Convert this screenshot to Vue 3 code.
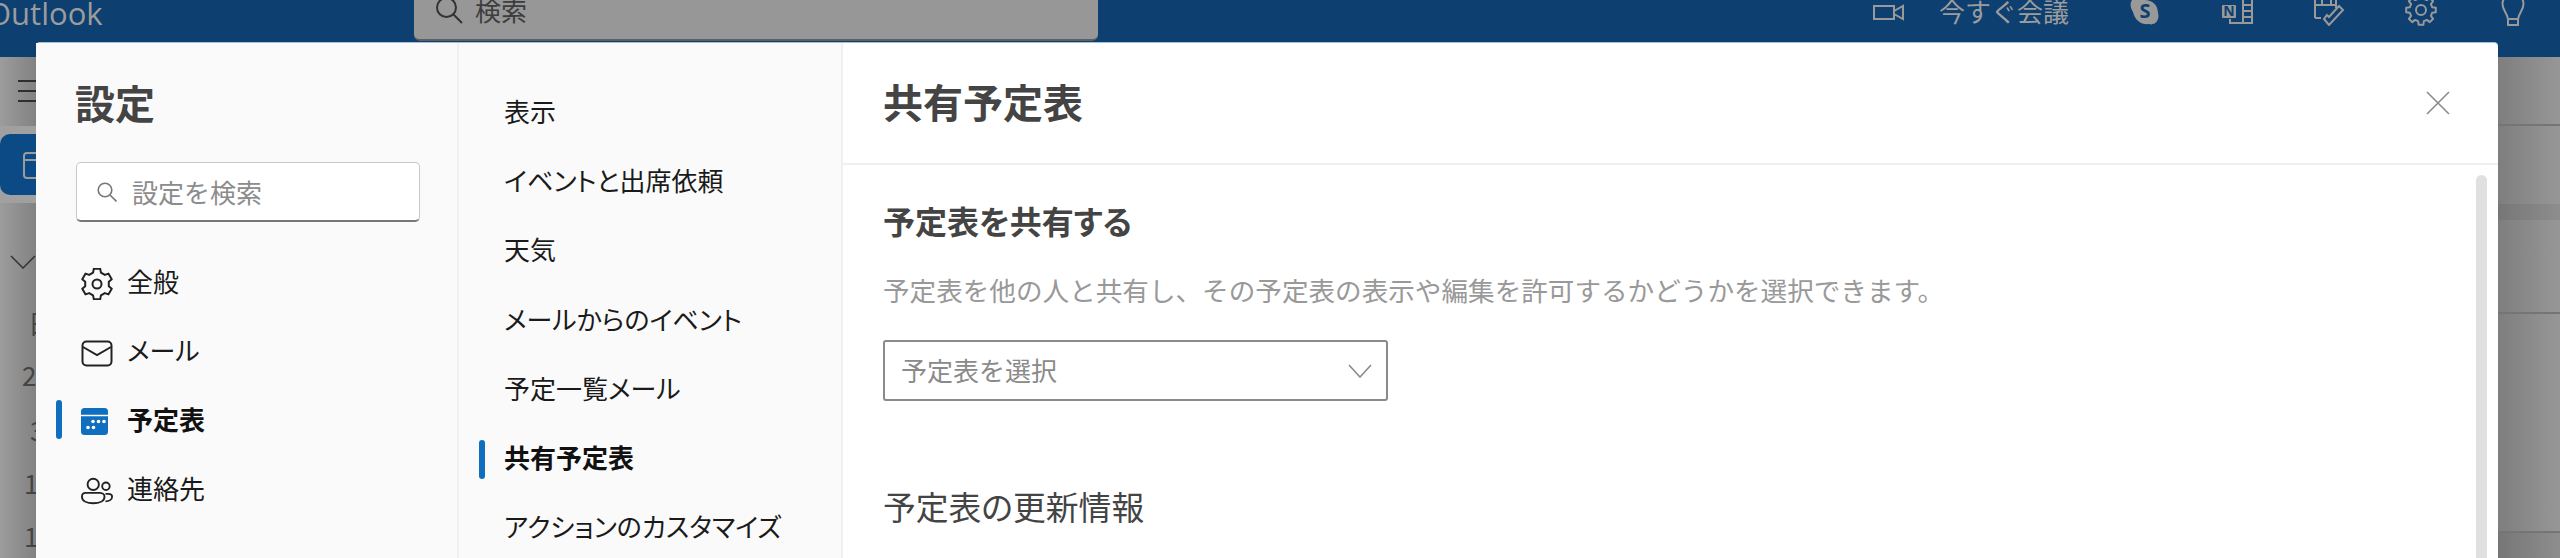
<script setup>
// gear outline, same helper for the header icon and the settings nav
const gearPath = (c, inner, outer, teeth) => {
  const step = (Math.PI * 2) / teeth
  const pts = []
  for (let i = 0; i < teeth; i++) {
    const a = i * step - Math.PI / 2
    const w = step * 0.2
    const g = step * 0.32
    pts.push([a - g, inner], [a - w, outer], [a + w, outer], [a + g, inner])
  }
  return (
    'M' +
    pts
      .map(([a, r]) => (c + r * Math.cos(a)).toFixed(2) + ' ' + (c + r * Math.sin(a)).toFixed(2))
      .join('L') +
    'Z'
  )
}

const topGear = gearPath(16, 11.5, 15, 8)
const navGear = gearPath(16, 12, 15.5, 6)

const railDays = [
  { t: '日', x: 28, h: 52 },
  { t: '2', x: 22, h: 55 },
  { t: '3', x: 30, h: 53 },
  { t: '1', x: 24, h: 53 },
  { t: '1', x: 24, h: 53 }
]

const stripBands = [
  { h: 69, line: true },
  { h: 78, line: false },
  { h: 16, line: false, dark: true },
  { h: 94, line: true },
  { h: 96, line: false },
  { h: 123, line: true },
  { h: 30, line: false, dark: true }
]

const subItems = [
  { label: '表示' },
  { label: 'イベントと出席依頼' },
  { label: '天気' },
  { label: 'メールからのイベント' },
  { label: '予定一覧メール' },
  { label: '共有予定表', active: true },
  { label: 'アクションのカスタマイズ' }
]
</script>

<template>
  <div class="page">
    <header class="topbar">
      <div class="logo">Outlook</div>
      <div class="topsearch">
        <svg class="topsearch-icon" width="28" height="28" viewBox="0 0 28 28" fill="none" stroke="#333" stroke-width="2">
          <circle cx="11.5" cy="11.5" r="9.5" />
          <path d="M18.5 18.5 27 27" />
        </svg>
        <span>検索</span>
      </div>
      <div class="top-actions">
        <div class="meet">
          <svg width="32" height="32" viewBox="0 0 32 32" fill="none" stroke="#999" stroke-width="2">
            <rect x="1" y="12" width="20" height="13" />
            <path d="M21 17 30 12V25L21 20" />
          </svg>
          <span>今すぐ会議</span>
        </div>
        <svg width="32" height="32" viewBox="0 0 32 32">
          <path d="M3 6C6 3 12 5 16 6 23 6 29 11 29 19 31 26 26 32 20 30 13 31 6 27 4 18 1 13 1 9 3 6Z" fill="#999" />
          <text x="16" y="24" text-anchor="middle" class="icon-letter">S</text>
        </svg>
        <svg width="32" height="32" viewBox="0 0 32 32" fill="none" stroke="#999" stroke-width="2">
          <path d="M9 25V29H31V3H22V29M22 11H31M22 17H31M22 23H31" />
          <rect x="1" y="11" width="14" height="13" rx="1" fill="#999" stroke="none" />
          <text x="8" y="22" text-anchor="middle" class="icon-letter small">N</text>
        </svg>
        <svg width="32" height="32" viewBox="0 0 32 32" fill="none" stroke="#999" stroke-width="2">
          <path d="M2 24H8M2 24V2M2 11H23M23 2V14M9 6V11M18 6V11" />
          <path d="M11 25 16 31 30 16 26 12 16 23 14 21Z" />
        </svg>
        <svg width="32" height="32" viewBox="0 0 32 32" fill="none" stroke="#999" stroke-width="2" stroke-linejoin="round">
          <path :d="topGear" />
          <circle cx="16" cy="16" r="5" />
        </svg>
        <svg width="32" height="32" viewBox="0 0 32 32" fill="none" stroke="#999" stroke-width="2">
          <path d="M11 25C10 19 5.500 16 5.500 10 5.500 4 10 0 16 0 22 0 26.500 4 26.500 10 26.500 16 22 19 21 25Z" />
          <path d="M11 25V31H21V25" />
        </svg>
      </div>
    </header>

    <div class="behind">
      <aside class="rail">
        <div class="burger"><i></i><i></i><i></i></div>
        <div class="rail-app">
          <div class="rail-btn">
            <svg width="46" height="30" viewBox="0 0 46 30" fill="none" stroke="#9b9b9b" stroke-width="2">
              <rect x="24" y="3" width="30" height="25" rx="3" />
              <path d="M24 10H54" />
            </svg>
          </div>
        </div>
        <svg class="rail-chevron" width="26" height="14" viewBox="0 0 26 14" fill="none" stroke="#333" stroke-width="1.500">
          <path d="M1 1 13 13 25 1" />
        </svg>
        <div
          v-for="(d, i) in railDays"
          :key="i"
          class="rail-day"
          :style="{ paddingLeft: d.x + 'px', height: d.h + 'px' }"
        >{{ d.t }}</div>
      </aside>
      <div class="behind-fill"></div>
      <div class="strip">
        <div
          v-for="(b, i) in stripBands"
          :key="i"
          class="band"
          :class="{ line: b.line, dark: b.dark }"
          :style="{ height: b.h + 'px' }"
        ></div>
      </div>
    </div>

    <section class="modal">
      <div class="col-nav">
        <h1 class="modal-title">設定</h1>
        <div class="search">
          <svg width="20" height="20" viewBox="0 0 20 20" fill="none" stroke="#777" stroke-width="1.600">
            <circle cx="8" cy="8" r="6.800" />
            <path d="M13 13 19.500 19.500" />
          </svg>
          <span>設定を検索</span>
        </div>
        <nav class="nav">
          <div class="nav-item">
            <svg class="nav-icon" width="32" height="32" viewBox="0 0 32 32" fill="none" stroke="#222" stroke-width="2" stroke-linejoin="round">
              <path :d="navGear" />
              <circle cx="16" cy="16" r="4.500" />
            </svg>
            <span>全般</span>
          </div>
          <div class="nav-item">
            <svg class="nav-icon" width="32" height="32" viewBox="0 0 32 32" fill="none" stroke="#222" stroke-width="2">
              <rect x="1.500" y="4.500" width="29" height="24" rx="4" />
              <path d="M2 10 16 18 30 10" />
            </svg>
            <span>メール</span>
          </div>
          <div class="nav-item active">
            <svg class="nav-icon" width="32" height="32" viewBox="0 0 32 32">
              <rect x="0" y="2" width="27" height="27" rx="3.500" fill="#106ebe" />
              <path d="M0 9.500H27" stroke="#fff" stroke-width="1.500" />
              <g fill="#fff">
                <circle cx="12" cy="15.500" r="1.800" />
                <circle cx="17.500" cy="15.500" r="1.800" />
                <circle cx="23" cy="15.500" r="1.800" />
                <circle cx="7" cy="21.500" r="1.800" />
                <circle cx="12.500" cy="21.500" r="1.800" />
              </g>
            </svg>
            <span>予定表</span>
          </div>
          <div class="nav-item">
            <svg class="nav-icon" width="34" height="32" viewBox="0 0 34 32" fill="none" stroke="#222" stroke-width="2">
              <circle cx="13" cy="9" r="6" />
              <circle cx="26.500" cy="11" r="4" />
              <path d="M1 22C1 19 3 18 5 18H20C22 18 25 19 25 22 25 27 19 29 13 29 7 29 1 27 1 22Z" />
              <path d="M26 19H29C31 19 33 20 33 22 33 25 30 27 26 27" />
            </svg>
            <span>連絡先</span>
          </div>
        </nav>
      </div>

      <div class="col-sub">
        <div
          v-for="item in subItems"
          :key="item.label"
          class="sub-item"
          :class="{ active: item.active }"
        >{{ item.label }}</div>
      </div>

      <div class="col-main">
        <div class="main-head">
          <h2 class="main-title">共有予定表</h2>
          <svg width="24" height="24" viewBox="0 0 24 24" fill="none" stroke="#8a8a8a" stroke-width="1.600">
            <path d="M1 1 23 23M23 1 1 23" />
          </svg>
        </div>
        <div class="main-body">
          <h3 class="section-title">予定表を共有する</h3>
          <p class="desc">予定表を他の人と共有し、その予定表の表示や編集を許可するかどうかを選択できます。</p>
          <div class="select">
            <span>予定表を選択</span>
            <svg width="24" height="14" viewBox="0 0 24 14" fill="none" stroke="#8a8a8a" stroke-width="1.600">
              <path d="M1 1 12 13 23 1" />
            </svg>
          </div>
          <h3 class="section-title plain">予定表の更新情報</h3>
        </div>
        <div class="scrollbar"></div>
      </div>
    </section>
  </div>
</template>

<style scoped>
.page {
  position: relative;
  width: 2560px;
  height: 558px;
  overflow: hidden;
  background: #969696;
  font-family: "Noto Sans CJK JP", "Open Sans", sans-serif;
}
.topbar {
  display: flex;
  align-items: flex-start;
  height: 57px;
  background: #0d3f71;
  color: #9c9c9c;
  padding-right: 31px;
  box-sizing: border-box;
  overflow: hidden;
}
.logo {
  font-family: "Open Sans", sans-serif;
  font-size: 31px;
  line-height: 40px;
  margin-top: -7px;
  margin-left: -13px;
  width: 427px;
  flex-shrink: 0;
}
.topsearch {
  display: flex;
  align-items: center;
  gap: 12px;
  width: 684px;
  height: 61px;
  margin-top: -20px;
  padding-left: 21px;
  box-sizing: border-box;
  background: #979797;
  border-bottom: 2px solid #5f5f5f;
  border-radius: 6px;
  color: #3d3d3d;
  font-size: 26px;
  flex-shrink: 0;
}
.top-actions {
  display: flex;
  align-items: flex-start;
  gap: 60px;
  margin-left: auto;
  margin-top: -6px;
}
.meet {
  display: flex;
  align-items: flex-start;
  gap: 34px;
  font-size: 26px;
  line-height: 34px;
}
.icon-letter {
  font-family: "Open Sans", sans-serif;
  font-size: 20px;
  font-weight: 700;
  fill: #0d3f71;
  stroke: none;
}
.icon-letter.small {
  font-size: 14px;
}

.behind {
  display: flex;
  height: 501px;
}
.rail {
  width: 36px;
  overflow: hidden;
  flex-shrink: 0;
  color: #444;
  font-size: 26px;
  background: linear-gradient(to right, #9c9c9c, #828282);
}
.burger {
  display: flex;
  flex-direction: column;
  gap: 8px;
  height: 69px;
  padding: 23px 0 0 18px;
  box-sizing: border-box;
}
.burger i {
  display: block;
  height: 2px;
  background: #2f2f2f;
}
.rail-app {
  height: 77px;
  padding: 8px 0;
  box-sizing: border-box;
  background: #a0a0a0;
}
.rail-btn {
  height: 61px;
  width: 46px;
  border-radius: 10px;
  background: #0c4a86;
  display: flex;
  align-items: center;
  overflow: hidden;
}
.rail-chevron {
  display: block;
  margin: 52px 0 28px 10px;
}
.rail-day {
  line-height: 52px;
  box-sizing: border-box;
}
.behind-fill {
  flex: 1;
}
.strip {
  width: 62px;
  flex-shrink: 0;
  background: linear-gradient(to right, #7e7e7e, #969696 60px);
}
.band.line {
  border-bottom: 2px solid #757575;
  box-sizing: border-box;
}
.band.dark {
  background: rgba(0, 0, 0, 0.06);
}

/* settings dialog sits on top of the dimmed app */
.modal {
  position: absolute;
  top: 42px;
  left: 36px;
  width: 2462px;
  height: 600px;
  display: flex;
  background: #fff;
  border-top: 1px solid #a8bfdb;
  border-radius: 4px 4px 0 0;
  box-sizing: border-box;
  color: #1a1a1a;
}
.col-nav {
  width: 423px;
  flex-shrink: 0;
  background: #fafafa;
  border-right: 2px solid #f0f0f0;
  box-sizing: border-box;
  padding: 33px 37px 0 39px;
}
.modal-title {
  margin: 0;
  font-size: 40px;
  line-height: 52px;
  font-weight: 700;
  color: #444;
}
.search {
  display: flex;
  align-items: center;
  gap: 15px;
  height: 60px;
  margin-top: 34px;
  margin-left: 1px;
  padding-left: 20px;
  box-sizing: border-box;
  background: #fff;
  border: 1px solid #c8c8c8;
  border-bottom: 2px solid #777;
  border-radius: 5px;
  color: #8c8c8c;
  font-size: 26px;
}
.nav {
  margin-top: 25px;
}
.nav-item {
  position: relative;
  display: flex;
  align-items: center;
  height: 69px;
  padding-left: 6px;
  gap: 14px;
  font-size: 26px;
  font-feature-settings: "palt";
}
.nav-item span {
  margin-bottom: 3px;
}
.nav-icon {
  width: 32px;
  flex-shrink: 0;
  margin-top: 5px;
}
.nav-item.active {
  font-weight: 700;
  color: #111;
}
.nav-item.active::before,
.sub-item.active::before {
  content: "";
  position: absolute;
  width: 6px;
  height: 39px;
  border-radius: 3px;
  background: #106ebe;
}
.nav-item.active::before {
  top: 15px;
  left: -19px;
}

.col-sub {
  width: 384px;
  flex-shrink: 0;
  background: #fafafa;
  border-right: 2px solid #f0f0f0;
  box-sizing: border-box;
  padding: 33px 0 0 45px;
}
.sub-item {
  position: relative;
  height: 69.2px;
  line-height: 69px;
  font-size: 26px;
  font-feature-settings: "palt";
  white-space: nowrap;
}
.sub-item.active {
  font-weight: 700;
  color: #111;
}
.sub-item.active::before {
  top: 18px;
  left: -25px;
}

.col-main {
  position: relative;
  flex: 1;
}
.main-head {
  display: flex;
  align-items: center;
  justify-content: space-between;
  height: 122px;
  padding: 0 48px 0 40px;
  box-sizing: border-box;
  border-bottom: 2px solid #f0f0f0;
}
.main-title {
  margin: 0 0 5px;
  font-size: 40px;
  font-weight: 700;
  color: #444;
}
.main-body {
  padding: 33px 0 0 40px;
}
.section-title {
  margin: 0;
  font-size: 32px;
  line-height: 44px;
  font-weight: 700;
  color: #444;
  font-feature-settings: "palt";
}
.section-title.plain {
  margin-top: 83px;
  font-size: 32.8px;
  font-weight: 400;
}
.desc {
  margin: 28px 0 0;
  font-size: 26.6px;
  line-height: 40px;
  color: #999;
}
.select {
  display: flex;
  align-items: center;
  justify-content: space-between;
  width: 505px;
  height: 61px;
  margin-top: 30px;
  padding: 0 14px 3px 16px;
  box-sizing: border-box;
  border: 2px solid #8a8a8a;
  border-radius: 3px;
  color: #8a8a8a;
  font-size: 26px;
}
.select svg {
  margin-top: 3px;
}
.scrollbar {
  position: absolute;
  top: 132px;
  right: 11px;
  bottom: 0;
  width: 11px;
  border-radius: 6px 6px 0 0;
  background: #e0e0e0;
}
</style>
